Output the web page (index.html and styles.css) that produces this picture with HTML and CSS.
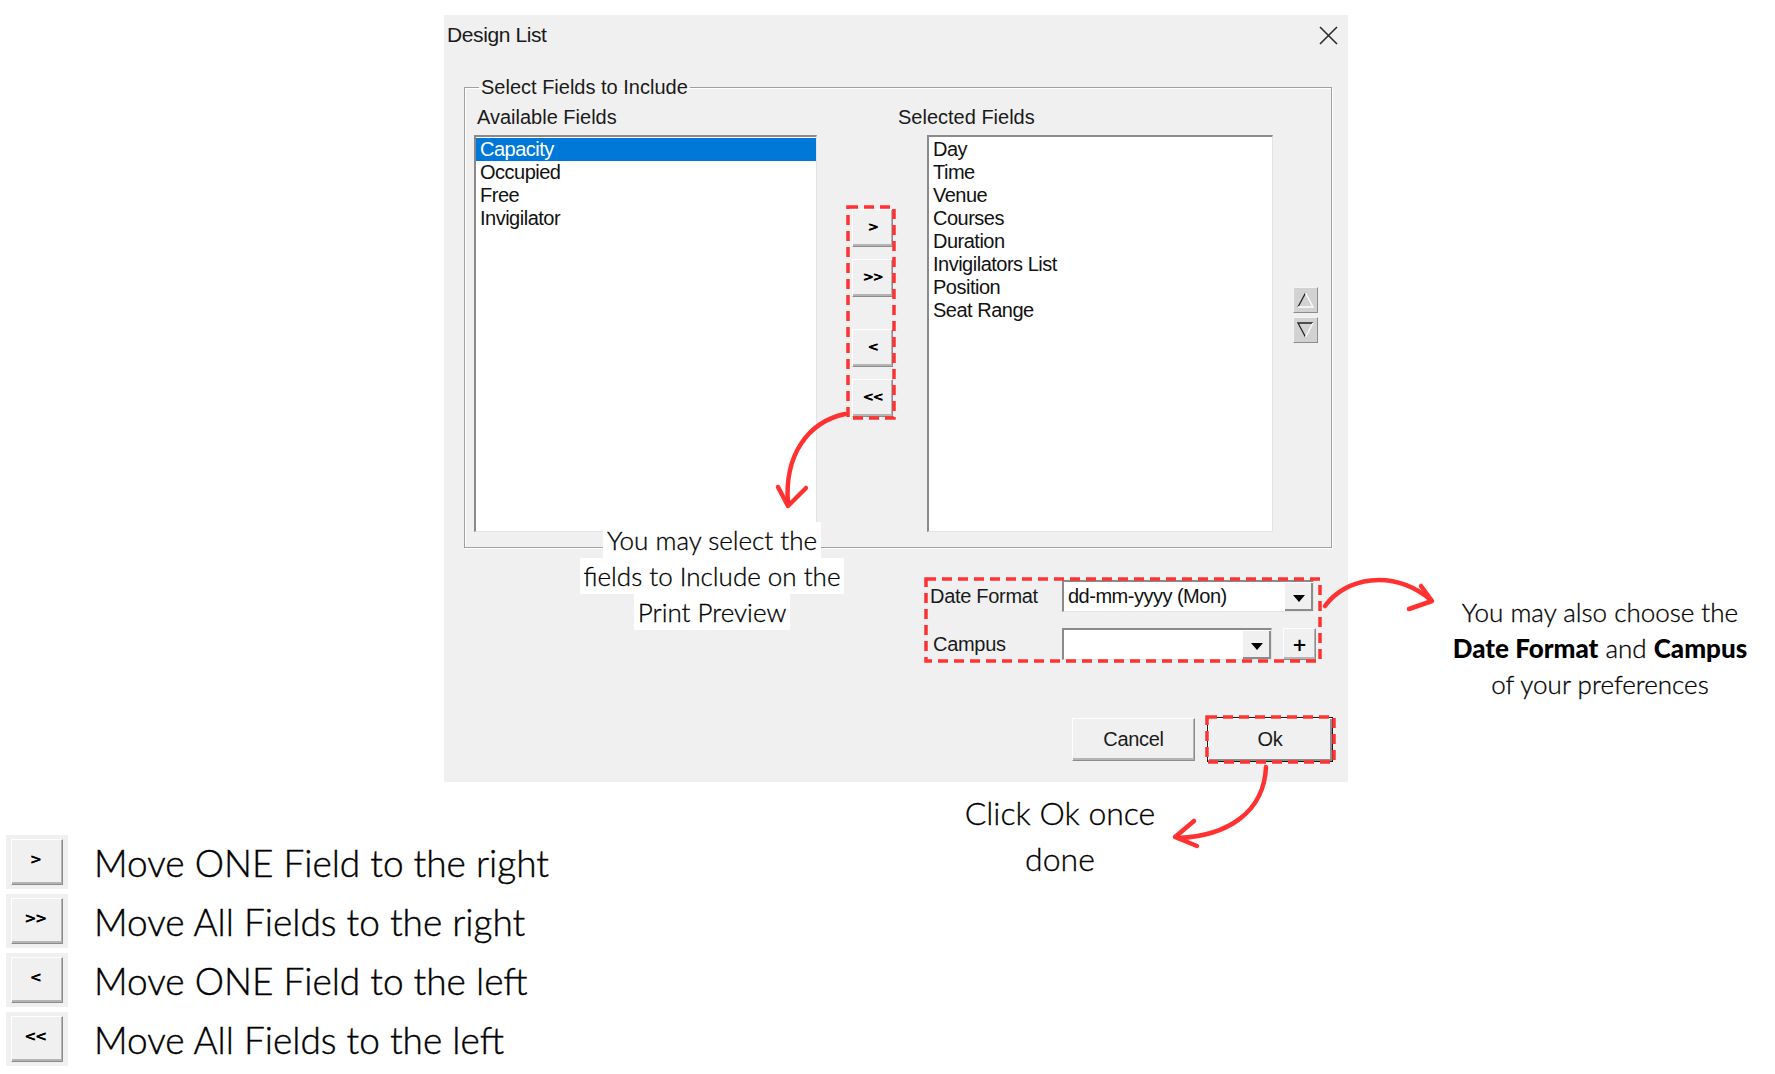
FILE: index.html
```html
<!DOCTYPE html>
<html>
<head>
<meta charset="utf-8">
<title>Design List</title>
<link rel="stylesheet" href="styles.css">
</head>
<body>
<div class="stage">

  <!-- dialog -->
  <div class="dialog">
    <div class="titlebar">
      <span class="title">Design List</span>
      <svg class="close" width="19" height="19" viewBox="0 0 19 19"><path d="M1 1 L18 18 M18 1 L1 18" stroke="#2b2b2b" stroke-width="1.6" fill="none"/></svg>
    </div>

    <fieldset class="group">
      <legend>Select Fields to Include</legend>
      <div class="group-grid">
        <div class="lbl lbl-avail">Available Fields</div>
        <div class="lbl lbl-sel">Selected Fields</div>

        <ul class="listbox">
          <li class="sel">Capacity</li>
          <li>Occupied</li>
          <li>Free</li>
          <li>Invigilator</li>
        </ul>

        <div class="movebtns">
          <button class="btn mv">&gt;</button>
          <button class="btn mv">&gt;&gt;</button>
          <button class="btn mv apart">&lt;</button>
          <button class="btn mv">&lt;&lt;</button>
        </div>

        <ul class="listbox">
          <li>Day</li>
          <li>Time</li>
          <li>Venue</li>
          <li>Courses</li>
          <li>Duration</li>
          <li>Invigilators List</li>
          <li>Position</li>
          <li>Seat Range</li>
        </ul>

        <div class="updown">
          <button class="btn ud"><svg width="19" height="18" viewBox="0 0 19 18"><path d="M2 16 L9.5 2" stroke="#222" stroke-width="1.3" fill="none"/><path d="M9.5 2 L17 16 L2 16" stroke="#fff" stroke-width="1.3" fill="none"/></svg></button>
          <button class="btn ud"><svg width="19" height="18" viewBox="0 0 19 18"><path d="M17 2 L2 2 L9.5 16" stroke="#222" stroke-width="1.3" fill="none"/><path d="M9.5 16 L17 2" stroke="#fff" stroke-width="1.3" fill="none"/></svg></button>
        </div>
      </div>
    </fieldset>

    <div class="options">
      <span class="opt-lbl">Date Format</span>
      <div class="combo combo-date">
        <span class="combo-val">dd-mm-yyyy (Mon)</span>
        <span class="drop"><i class="tri"></i></span>
      </div>
      <span class="opt-lbl campus">Campus</span>
      <div class="campus-row">
        <div class="combo combo-campus">
          <span class="combo-val"></span>
          <span class="drop"><i class="tri"></i></span>
        </div>
        <button class="btn plus">+</button>
      </div>
    </div>

    <div class="actions">
      <button class="btn action">Cancel</button>
      <button class="btn action default">Ok</button>
    </div>
  </div>

  <!-- key of the move buttons -->
  <ul class="keys">
    <li><span class="key"><span class="btn keybtn">&gt;</span></span><span class="key-txt">Move ONE Field to the right</span></li>
    <li><span class="key"><span class="btn keybtn">&gt;&gt;</span></span><span class="key-txt">Move All Fields to the right</span></li>
    <li><span class="key"><span class="btn keybtn">&lt;</span></span><span class="key-txt">Move ONE Field to the left</span></li>
    <li><span class="key"><span class="btn keybtn">&lt;&lt;</span></span><span class="key-txt">Move All Fields to the left</span></li>
  </ul>

  <!-- annotations -->
  <svg class="marks" width="1775" height="1074" viewBox="0 0 1775 1074">
    <g fill="none" stroke="#ff3131" stroke-width="3.5" stroke-dasharray="10 6">
      <rect x="848" y="207" width="46" height="211"/>
      <rect x="926" y="579" width="394" height="82"/>
      <rect x="1207" y="717" width="127" height="45"/>
    </g>
    <g fill="none" stroke="#ff3131" stroke-width="4.5" stroke-linecap="round" stroke-linejoin="round">
      <path d="M845 414 C808 422 784 455 788 504"/>
      <path d="M778 487 L788 506 L806 488"/>
      <path d="M1325 606 C1345 578 1392 568 1431 600"/>
      <path d="M1421 586 L1432 601 L1409 609"/>
      <path d="M1266 767 C1264 812 1228 836 1178 838"/>
      <path d="M1194 821 L1175 837 L1197 846"/>
    </g>
  </svg>

  <div class="note note-select">
    <span>You may select the</span>
    <span>fields to Include on the</span>
    <span>Print Preview</span>
  </div>

  <div class="note note-options">
    <span>You may also choose the</span>
    <span><b>Date Format</b> and <b>Campus</b></span>
    <span>of your preferences</span>
  </div>

  <div class="note note-ok">
    <span>Click Ok once</span>
    <span>done</span>
  </div>

</div>
</body>
</html>
```

FILE: styles.css
```css
/* Reset */
* {
	margin:0;
	padding:0;
	box-sizing:border-box;
}
body {
	background:#FFF;
	color:#000;
	font:20px "Liberation Sans", Arial, sans-serif;
}
ul, li {
	list-style:none;
}

.stage {
	position:relative;
	width:1775px;
	height:1074px;
	padding-top:15px;
	overflow:hidden;
}

/* Dialog */
.dialog {
	width:904px;
	height:767px;
	margin-left:444px;
	background:#F0F0F0;
	display:flex;
	flex-direction:column;
}
.titlebar {
	height:40px;
	display:flex;
	align-items:center;
	justify-content:space-between;
	padding:0 10px 0 3px;
}
.title {
	color:#1a1a1a;
	font-size:21px;
	letter-spacing:-0.4px;
}

.group {
	margin:20px 16px 0 20px;
	border:1px solid #A0A0A0;
	box-shadow:inset 1px 1px #FFF, 1px 1px #FFF;
	min-width:0;
}
.group legend {
	margin-left:14px;
	padding:0 2px;
	line-height:24px;
	color:#1a1a1a;
}
.group-grid {
	display:grid;
	grid-template-columns:343px 110px 346px 1fr;
	grid-template-rows:24px 397px;
	row-gap:6px;
	padding:6px 0 15px 9px;
	align-items:start;
}
.lbl {
	line-height:24px;
	color:#1a1a1a;
}
.lbl-avail {
	padding-left:3px;
}
.lbl-sel {
	grid-column:2 / 5;
	padding-left:81px;
}

.listbox {
	height:397px;
	background:#FFF;
	border-style:solid;
	border-width:2px 1px 1px 2px;
	border-color:#8A8A8A #E3E3E3 #E3E3E3 #8A8A8A;
	padding-top:1px;
}
.listbox li {
	height:23px;
	line-height:23px;
	padding-left:4px;
	letter-spacing:-0.5px;
	color:#111;
}
.listbox li.sel {
	background:#0078D7;
	color:#FFF;
}

/* Buttons */
.btn {
	display:flex;
	align-items:center;
	justify-content:center;
	background:#F0F0F0;
	border:1px solid;
	border-color:#FFF #8C8C8C #8C8C8C #FFF;
	box-shadow:inset -1px -2px #B4B4B4;
	font:inherit;
	color:#000;
}
.movebtns {
	display:flex;
	flex-direction:column;
	gap:12px;
	margin:74px 0 0 35px;
	width:41px;
}
.mv {
	height:38px;
	padding-bottom:4px;
	font-family:"DejaVu Sans", sans-serif;
	font-size:13px;
	font-weight:bold;
	letter-spacing:-1px;
	text-shadow:0.6px 0 #000;
}
.movebtns .apart {
	margin-top:20px;
}
.updown {
	display:flex;
	flex-direction:column;
	gap:4px;
	margin:152px 0 0 20px;
	width:25px;
}
.ud {
	height:26px;
	background:#D2D2D2;
	border-color:#F4F4F4 #8C8C8C #8C8C8C #F4F4F4;
	box-shadow:none;
}

/* Date format / campus */
.options {
	display:grid;
	grid-template-columns:135px auto;
	row-gap:16px;
	align-items:center;
	margin:32px 0 0 483px;
	width:395px;
}
.opt-lbl {
	padding-left:3px;
	color:#1a1a1a;
	letter-spacing:-0.3px;
}
.opt-lbl.campus {
	padding-left:6px;
}
.combo {
	height:32px;
	display:flex;
	background:#FFF;
	border-style:solid;
	border-width:2px 1px 1px 2px;
	border-color:#8A8A8A #E3E3E3 #E3E3E3 #8A8A8A;
}
.combo-date {
	width:252px;
}
.combo-campus {
	width:210px;
}
.combo-val {
	flex:1;
	padding-left:4px;
	line-height:28px;
	letter-spacing:-0.5px;
	color:#111;
}
.drop {
	width:29px;
	display:flex;
	align-items:center;
	justify-content:center;
	background:#F0F0F0;
	border-left:1px solid #FFF;
	border-top:1px solid #FFF;
	box-shadow:inset -2px -2px #8C8C8C;
}
.tri {
	width:0;
	height:0;
	border-left:6px solid transparent;
	border-right:6px solid transparent;
	border-top:7px solid #000;
	margin-top:2px;
}
.campus-row {
	display:flex;
	gap:11px;
}
.plus {
	width:33px;
	height:32px;
	font-family:"DejaVu Sans", sans-serif;
	font-size:18px;
	font-weight:bold;
}

.actions {
	display:flex;
	justify-content:flex-end;
	align-items:center;
	gap:12px;
	margin-top:57px;
	padding-right:15px;
}
.action {
	width:123px;
	height:43px;
	letter-spacing:-0.3px;
	color:#1a1a1a;
}
.action.default {
	width:126px;
	height:45px;
	border:1px solid #1a1a1a;
	box-shadow:inset 1px 1px #FFF, inset -2px -2px #8C8C8C;
}

/* Key list */
.keys {
	display:flex;
	flex-direction:column;
	gap:5px;
	margin:53px 0 0 6px;
}
.keys li {
	display:flex;
	align-items:center;
	gap:26px;
	height:54px;
}
.key {
	width:62px;
	height:54px;
	padding:4px 5px;
	background:#F0F0F0;
	display:flex;
}
.keybtn {
	flex:1;
	font-family:"DejaVu Sans", sans-serif;
	font-size:14px;
	font-weight:bold;
	letter-spacing:-1px;
	padding:0 4px 6px 0;
	text-shadow:0.6px 0 #000;
}
.key-txt {
	font-family:Lato, "Open Sans", sans-serif;
	font-weight:300;
	font-size:37px;
	color:#000;
	-webkit-text-stroke:0.4px #000;
}

/* Annotations */
.marks {
	position:absolute;
	left:0;
	top:0;
	pointer-events:none;
}
.note {
	position:absolute;
	display:flex;
	flex-direction:column;
	align-items:center;
	font-family:Lato, "Open Sans", sans-serif;
	font-weight:300;
	color:#000;
	text-align:center;
	-webkit-text-stroke:0.3px #000;
}
.note-select {
	left:562px;
	top:522px;
	width:300px;
	font-size:26px;
	line-height:36px;
}
.note-select span {
	background:#FFF;
	padding:0 4px;
}
.note-options {
	left:1440px;
	top:594px;
	width:320px;
	font-size:26px;
	line-height:36px;
}
.note-options b {
	font-weight:900;
	-webkit-text-stroke:0;
}
.note-ok {
	left:950px;
	top:790px;
	width:220px;
	font-size:32px;
	line-height:46px;
}
```
